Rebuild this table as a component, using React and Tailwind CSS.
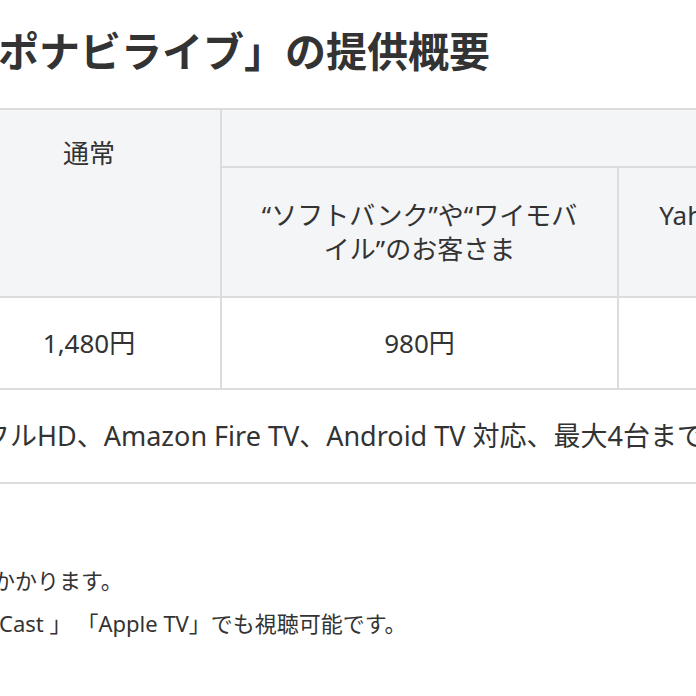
import React from "react";

const cellBorder = "border-2 border-[#dcdcdc]";

const App = () => {
  return (
    <div className="w-[696px] h-[696px] overflow-hidden bg-white text-[#333333] font-['Noto_Sans','Noto_Sans_CJK_JP',sans-serif]">
      {/* Title */}
      <h2 className="pt-[21px] ml-[-2px] text-[41px] leading-[60px] font-bold text-[#333333] whitespace-nowrap">
        ポナビライブ」の提供概要
      </h2>

      {/* Plan table */}
      <table className="mt-[27px] ml-[-44px] table-fixed border-collapse w-[1058px] text-[26px] leading-[34px]">
        <colgroup>
          <col className="w-[264px]" />
          <col className="w-[397px]" />
          <col className="w-[397px]" />
        </colgroup>
        <tbody>
          <tr className="h-[58px] bg-[#f4f5f7]">
            <td rowSpan={2} className={`${cellBorder} align-top text-center pt-[26px]`}>
              通常
            </td>
            <td colSpan={2} className={cellBorder}></td>
          </tr>
          <tr className="h-[130px] bg-[#f4f5f7]">
            <td className={`${cellBorder} text-center align-middle px-[30px]`}>
              “ソフトバンク”や“ワイモバイル”のお客さま
            </td>
            <td className={`${cellBorder} text-center align-middle px-[30px]`}>
              Yahoo!プレミアム会員のお客さま
            </td>
          </tr>
          <tr className="h-[92px]">
            <td className={`${cellBorder} text-center align-middle`}>1,480円</td>
            <td className={`${cellBorder} text-center align-middle`}>980円</td>
            <td className={`${cellBorder} text-center align-middle`}>500円</td>
          </tr>
          <tr className="h-[94px]">
            <td colSpan={3} className={`${cellBorder} align-middle pl-[25px] whitespace-nowrap text-[27px]`}>
              フルHD、Amazon Fire TV、Android TV 対応、最大4台まで同時視聴可能
            </td>
          </tr>
        </tbody>
      </table>

      {/* Notes */}
      <div className="mt-[75px] text-[22px] leading-[43px] whitespace-nowrap">
        <p className="ml-[-7px]">かかります。</p>
        <p className="ml-[-1px]">
          Cast 」<span className="ml-[16px]">「Apple TV」でも視聴可能です。</span>
        </p>
      </div>
    </div>
  );
};

export default App;
